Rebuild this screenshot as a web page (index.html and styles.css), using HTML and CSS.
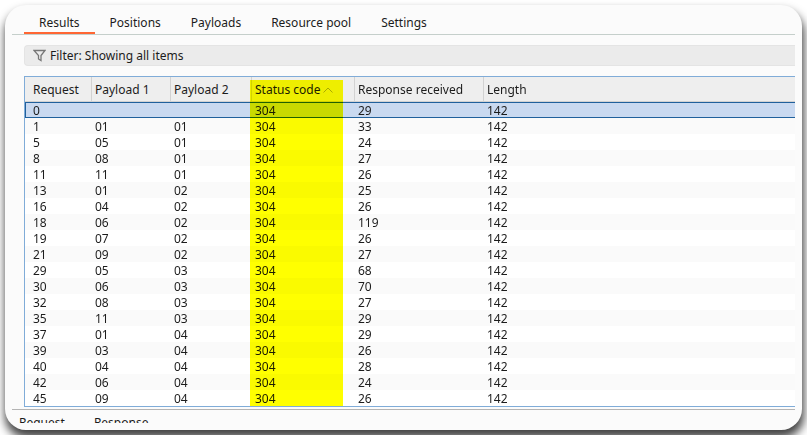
FILE: index.html
```
<!DOCTYPE html>
<html lang="en">
<head>
<meta charset="utf-8">
<title>Intruder results</title>
<link rel="stylesheet" href="styles.css">
</head>
<body>
<main class="panel">
  <nav class="tabs" role="tablist">
    <button class="tab active" role="tab" aria-selected="true">Results</button>
    <button class="tab" role="tab">Positions</button>
    <button class="tab" role="tab">Payloads</button>
    <button class="tab" role="tab">Resource pool</button>
    <button class="tab" role="tab">Settings</button>
  </nav>
  <section class="results">
    <button class="filter">
      <svg class="funnel" viewBox="0 0 13 13" width="13" height="13" aria-hidden="true"><path d="M1 1.5H12L8 6.5V11.5L5.5 10V6.5Z"/></svg>
      <span>Filter: Showing all items</span>
    </button>
    <div class="grid">
      <table>
        <colgroup><col class="c-request"><col class="c-p1"><col class="c-p2"><col class="c-status"><col class="c-response"><col></colgroup>
        <thead>
          <tr><th>Request</th><th>Payload 1</th><th>Payload 2</th><th aria-sort="ascending"><button class="sort">Status code<svg class="caret" viewBox="0 0 10 6" width="10" height="6" aria-hidden="true"><path d="M0.5 5.5L5 1L9.5 5.5"/></svg></button></th><th>Response received</th><th>Length</th></tr>
        </thead>
        <tbody>
          <tr class="selected"><td>0</td><td></td><td></td><td>304</td><td>29</td><td>142</td></tr>
          <tr><td>1</td><td>01</td><td>01</td><td>304</td><td>33</td><td>142</td></tr>
          <tr><td>5</td><td>05</td><td>01</td><td>304</td><td>24</td><td>142</td></tr>
          <tr><td>8</td><td>08</td><td>01</td><td>304</td><td>27</td><td>142</td></tr>
          <tr><td>11</td><td>11</td><td>01</td><td>304</td><td>26</td><td>142</td></tr>
          <tr><td>13</td><td>01</td><td>02</td><td>304</td><td>25</td><td>142</td></tr>
          <tr><td>16</td><td>04</td><td>02</td><td>304</td><td>26</td><td>142</td></tr>
          <tr><td>18</td><td>06</td><td>02</td><td>304</td><td>119</td><td>142</td></tr>
          <tr><td>19</td><td>07</td><td>02</td><td>304</td><td>26</td><td>142</td></tr>
          <tr><td>21</td><td>09</td><td>02</td><td>304</td><td>27</td><td>142</td></tr>
          <tr><td>29</td><td>05</td><td>03</td><td>304</td><td>68</td><td>142</td></tr>
          <tr><td>30</td><td>06</td><td>03</td><td>304</td><td>70</td><td>142</td></tr>
          <tr><td>32</td><td>08</td><td>03</td><td>304</td><td>27</td><td>142</td></tr>
          <tr><td>35</td><td>11</td><td>03</td><td>304</td><td>29</td><td>142</td></tr>
          <tr><td>37</td><td>01</td><td>04</td><td>304</td><td>29</td><td>142</td></tr>
          <tr><td>39</td><td>03</td><td>04</td><td>304</td><td>26</td><td>142</td></tr>
          <tr><td>40</td><td>04</td><td>04</td><td>304</td><td>28</td><td>142</td></tr>
          <tr><td>42</td><td>06</td><td>04</td><td>304</td><td>24</td><td>142</td></tr>
          <tr><td>45</td><td>09</td><td>04</td><td>304</td><td>26</td><td>142</td></tr>
        </tbody>
      </table>
      <div class="marker"></div>
    </div>
  </section>
  <nav class="messages">
    <button class="message">Request</button>
    <button class="message">Response</button>
  </nav>
</main>
</body>
</html>
```
FILE: styles.css
```
* { box-sizing: border-box; }

body {
  margin: 0;
  padding: 5px;
  background: #fff;
  color: #1c1c1c;
  font: 12px/16px "Noto Sans", sans-serif;
  overflow: hidden;
}

button {
  margin: 0;
  padding: 0;
  border: 0;
  background: none;
  color: inherit;
  font: inherit;
}

.panel {
  padding: 0 7px 7px;
  border-radius: 21px;
  background: #fbfbfb;
  box-shadow: 1px 7px 10px 1px #444;
}

/* Top tabs */
.tabs {
  display: flex;
  padding: 8px 0 0 12px;
  border-bottom: 1px solid #c5cfcb;
}

.tab {
  height: 21px;
  padding: 0 15px;
  border-bottom: 2px solid transparent;
  line-height: 16px;
}

.tab.active { border-bottom-color: #ff6633; }

/* Filter bar and table */
.results {
  padding: 10px 0 2px 12px;
  border-bottom: 1px solid #b4b4b4;
}

.filter {
  display: flex;
  align-items: center;
  gap: 4px;
  width: 100%;
  height: 21px;
  padding-left: 8px;
  border: 1px solid #e4e4e4;
  border-right: 0;
  border-radius: 4px 0 0 4px;
  background: #ebebeb;
}

.funnel {
  fill: none;
  stroke: #777;
  stroke-width: 1.3;
}

.grid {
  position: relative;
  isolation: isolate;
  margin-top: 10px;
  border: 1px solid #80acd8;
  border-right: 0;
}

table {
  width: 100%;
  table-layout: fixed;
  border-collapse: separate;
  border-spacing: 0;
  background: #fff;
}

.c-request { width: 67px; }
.c-p1 { width: 79px; }
.c-p2 { width: 81px; }
.c-status { width: 103px; }
.c-response { width: 129px; }

th, td {
  padding: 2px 0 0 3px;
  text-align: left;
  font-weight: normal;
  white-space: nowrap;
}

th:first-child, td:first-child { padding-left: 8px; }

th {
  height: 25px;
  border-right: 1px solid #d2d2d2;
  border-bottom: 1px solid #d2d2d2;
  background: #eee;
}

th:last-child { border-right: 0; }

td {
  height: 16px;
  line-height: 14px;
}

tbody tr:nth-child(even) { background: #fafafa; }

.selected { background: #c9d9f0; }

.selected td {
  border-top: 1px solid #20609c;
  border-bottom: 1px solid #20609c;
  line-height: 12px;
}

.selected td:first-child {
  padding-left: 7px;
  border-left: 1px solid #20609c;
}

.sort {
  display: flex;
  align-items: center;
  gap: 3px;
}

.caret {
  fill: none;
  stroke: #aaa;
}

/* Highlighter stroke laid over the status column */
.marker {
  position: absolute;
  top: 3px;
  bottom: 0;
  left: 225px;
  width: 93px;
  background: #ff0;
  mix-blend-mode: multiply;
  pointer-events: none;
}

/* Lower tabs, cut off by the panel's edge */
.messages {
  display: flex;
  align-items: flex-start;
  gap: 29px;
  height: 13px;
  padding: 5px 0 0 7px;
  overflow: hidden;
}
```
